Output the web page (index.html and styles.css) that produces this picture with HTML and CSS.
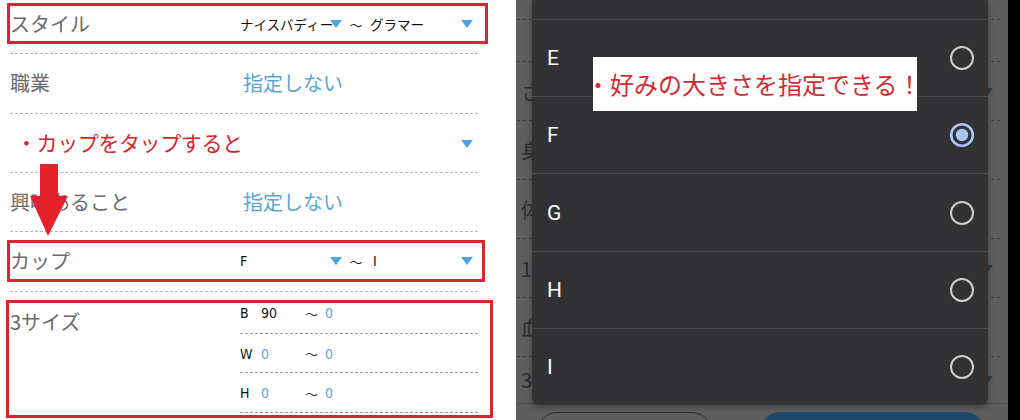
FILE: index.html
```html
<!DOCTYPE html>
<html lang="ja">
<head>
<meta charset="utf-8">
<title>検索条件</title>
<link rel="stylesheet" href="styles.css">
</head>
<body>
<div class="page">
  <section class="form">
    <div class="row r1">
      <div class="label">スタイル</div>
      <div class="range small">
        <div class="sel sa"><span>ナイスバディー</span><i class="tri"></i></div>
        <span class="tilde">〜</span>
        <div class="sel sb"><span>グラマー</span><i class="tri"></i></div>
      </div>
    </div>
    <div class="row r2">
      <div class="label">職業</div>
      <div class="blue">指定しない</div>
    </div>
    <div class="row r3">
      <span class="note">・カップをタップすると</span>
      <i class="tri static"></i>
    </div>
    <div class="row r4">
      <div class="label">興味あること</div>
      <div class="blue">指定しない</div>
    </div>
    <div class="row r5">
      <div class="label">カップ</div>
      <div class="range small">
        <div class="sel sa"><span class="latin">F</span><i class="tri"></i></div>
        <span class="tilde">〜</span>
        <div class="sel sb"><span class="latin ci">I</span><i class="tri"></i></div>
      </div>
    </div>
    <div class="r6">
      <div class="label l6">3サイズ</div>
      <div class="sizes">
        <div class="srow s1"><span class="k latin">B</span><span class="v latin">90</span><span class="t">〜</span><span class="z latin">0</span></div>
        <div class="srow s2"><span class="k latin">W</span><span class="v latin z">0</span><span class="t">〜</span><span class="z latin">0</span></div>
        <div class="srow s3"><span class="k latin">H</span><span class="v latin z">0</span><span class="t">〜</span><span class="z latin">0</span></div>
      </div>
    </div>

    <div class="mark m1"></div>
    <div class="mark m2"></div>
    <div class="mark m3"></div>
    <svg class="arrow" viewBox="0 0 42 72" aria-hidden="true">
      <rect x="12" y="0" width="18" height="36" fill="#e5222b"/>
      <polygon points="2,32 40,32 20,72" fill="#e5222b"/>
    </svg>
  </section>

  <section class="phone">
    <div class="under">
      <div class="u u0"></div>
      <div class="u u1"></div>
      <div class="u"><span class="frag">さ</span><i class="dtri"></i></div>
      <div class="u"><span class="frag">身</span></div>
      <div class="u"><span class="frag">体</span></div>
      <div class="u"><span class="frag">1</span><i class="dtri"></i></div>
      <div class="u"><span class="frag">血</span></div>
      <div class="u u6"><span class="frag">3</span><i class="dtri"></i></div>
      <div class="ubar"><span class="bo"></span><span class="bp"></span></div>
    </div>

    <div class="dialog">
      <div class="opt"><span>E</span><svg class="radio" viewBox="0 0 26 26"><circle cx="13" cy="13" r="11" fill="none" stroke="#cfcfcf" stroke-width="2"/></svg></div>
      <div class="opt"><span>F</span><svg class="radio" viewBox="0 0 26 26"><circle cx="13" cy="13" r="10.8" fill="none" stroke="#a9c8f6" stroke-width="2.6"/><circle cx="13" cy="13" r="6.2" fill="#a9c8f6"/></svg></div>
      <div class="opt"><span>G</span><svg class="radio" viewBox="0 0 26 26"><circle cx="13" cy="13" r="11" fill="none" stroke="#cfcfcf" stroke-width="2"/></svg></div>
      <div class="opt"><span>H</span><svg class="radio" viewBox="0 0 26 26"><circle cx="13" cy="13" r="11" fill="none" stroke="#cfcfcf" stroke-width="2"/></svg></div>
      <div class="opt"><span>I</span><svg class="radio" viewBox="0 0 26 26"><circle cx="13" cy="13" r="11" fill="none" stroke="#cfcfcf" stroke-width="2"/></svg></div>
    </div>

    <div class="callout">・好みの大きさを指定できる！</div>
  </section>

  <div class="edge"></div>
</div>
</body>
</html>
```

FILE: styles.css
```css
* { box-sizing: border-box; }
html, body { margin: 0; padding: 0; background: #fff; }
body {
  font-family: "Noto Sans CJK JP", "Noto Sans", sans-serif;
  width: 1020px;
  height: 420px;
  overflow: hidden;
}
.page {
  display: flex;
  width: 1020px;
  height: 420px;
  overflow: hidden;
  background: #fff;
}

/* ---------- left form ---------- */
.form {
  position: relative;
  width: 493px;
  flex: none;
  padding-left: 10px;
}
.row {
  display: flex;
  align-items: center;
  width: 469px;
  background: repeating-linear-gradient(90deg, #b2b2b2 0 3px, transparent 3px 5px) left bottom / 100% 1px no-repeat;
}
.label {
  width: 230px;
  flex: none;
  font-size: 20px;
  line-height: 24px;
  color: #6a6a6a;
}
.r1 { height: 54px; padding-bottom: 6px; }
.r2 { height: 60px; padding-bottom: 2px; }
.r3 { height: 59px; padding-bottom: 4px; justify-content: space-between; }
.r4 { height: 59px; padding-bottom: 2px; }
.r5 { height: 60px; padding-bottom: 2px; }

.blue {
  font-size: 20px;
  line-height: 24px;
  color: #5aa6d2;
  padding-left: 3px;
}
.note {
  font-size: 21px;
  line-height: 26px;
  color: #d8232b;
  margin-left: 6px;
  letter-spacing: -0.4px;
}

.range {
  display: flex;
  align-items: center;
  width: 233px;
}
.small {
  font-size: 13.5px;
  color: #111;
}
.sel {
  position: relative;
  display: flex;
  align-items: center;
  height: 22px;
  white-space: nowrap;
}
.sa { width: 102px; }
.sb { width: 103px; }
.tilde {
  width: 28px;
  text-align: center;
  font-size: 13px;
  color: #222;
}
.tri {
  position: absolute;
  right: 0;
  top: 50%;
  margin-top: -4px;
  width: 0;
  height: 0;
  border-left: 6px solid transparent;
  border-right: 6px solid transparent;
  border-top: 8px solid #4aa3e2;
}
.tri.static {
  position: static;
  margin: 4px 6px 0 0;
}
.latin {
  font-family: "DejaVu Sans Condensed", "DejaVu Sans", sans-serif;
  font-stretch: condensed;
  font-size: 14px;
  color: #111;
}
.ci { margin-left: 3px; }

.r6 {
  display: flex;
  width: 469px;
}
.l6 { padding-top: 18px; }
.sizes {
  display: flex;
  flex-direction: column;
  width: 239px;
}
.srow {
  display: flex;
  align-items: center;
  background: repeating-linear-gradient(90deg, #9c9c9c 0 3px, transparent 3px 5px) left bottom / 100% 1px no-repeat;
}
.s1 { height: 42px; }
.s2 { height: 39px; }
.s3 { height: 40px; }
.k { width: 21px; }
.v { width: 44px; }
.t { width: 20px; font-size: 13px; color: #333; }
.z { color: #5aa6d2; }

.mark {
  position: absolute;
  border: 3px solid #d6262e;
}
.m1 { left: 7px; top: 3px; width: 481px; height: 41px; }
.m2 { left: 7px; top: 240px; width: 478px; height: 42px; }
.m3 { left: 6px; top: 300px; width: 487px; height: 118px; }
.arrow {
  position: absolute;
  left: 28px;
  top: 164px;
  width: 42px;
  height: 72px;
}

/* ---------- right: dimmed screen + dialog ---------- */
.phone {
  position: relative;
  width: 492px;
  margin-left: 23px;
  flex: none;
  background: #5e5e5e;
  overflow: hidden;
}
.edge { flex: 1; background: #000; }

.under {
  display: flex;
  flex-direction: column;
  padding-left: 1px;
}
.u {
  position: relative;
  display: flex;
  align-items: center;
  justify-content: space-between;
  width: 484px;
  height: 59px;
  padding: 0 8px 0 4px;
  background: repeating-linear-gradient(90deg, #3b3b3b 0 3px, transparent 3px 6px) left bottom / 100% 1px no-repeat;
}
.u0 { height: 20px; }
.u1 { height: 42px; }
.u6 { height: 46px; background: none; }
.frag {
  display: block;
  width: 11px;
  overflow: hidden;
  white-space: nowrap;
  font-size: 20px;
  line-height: 24px;
  color: #2c2c2c;
}
.dtri {
  width: 0;
  height: 0;
  border-left: 6px solid transparent;
  border-right: 6px solid transparent;
  border-top: 8px solid #233f56;
}
.ubar {
  display: flex;
  height: 20px;
  border-top: 1px solid #4a4a4a;
  padding: 8px 0 0 20px;
}
.bo {
  width: 175px;
  height: 40px;
  flex: none;
  border: 1px solid #2c2c2c;
  border-radius: 20px;
}
.bp {
  width: 225px;
  height: 40px;
  flex: none;
  margin-left: 48px;
  background: #1d4868;
  border-radius: 20px;
}

.dialog {
  position: absolute;
  left: 16px;
  top: 0;
  width: 456px;
  height: 405px;
  padding-top: 19px;
  display: flex;
  flex-direction: column;
  background: #323234;
  border-radius: 0 0 7px 7px;
  box-shadow: 0 2px 6px rgba(0, 0, 0, 0.3);
}
.opt {
  flex: 1;
  display: flex;
  align-items: center;
  justify-content: space-between;
  border-top: 1px solid #4b4b4d;
  padding: 0 13px 0 15px;
  color: #fff;
  font-family: Roboto, "Noto Sans", sans-serif;
  font-size: 21px;
}
.radio {
  width: 26px;
  height: 26px;
}

.callout {
  position: absolute;
  left: 77px;
  top: 57px;
  width: 324px;
  height: 54px;
  background: #fff;
  color: #d42a30;
  font-size: 24px;
  line-height: 54px;
  white-space: nowrap;
  text-indent: -7px;
}
```
